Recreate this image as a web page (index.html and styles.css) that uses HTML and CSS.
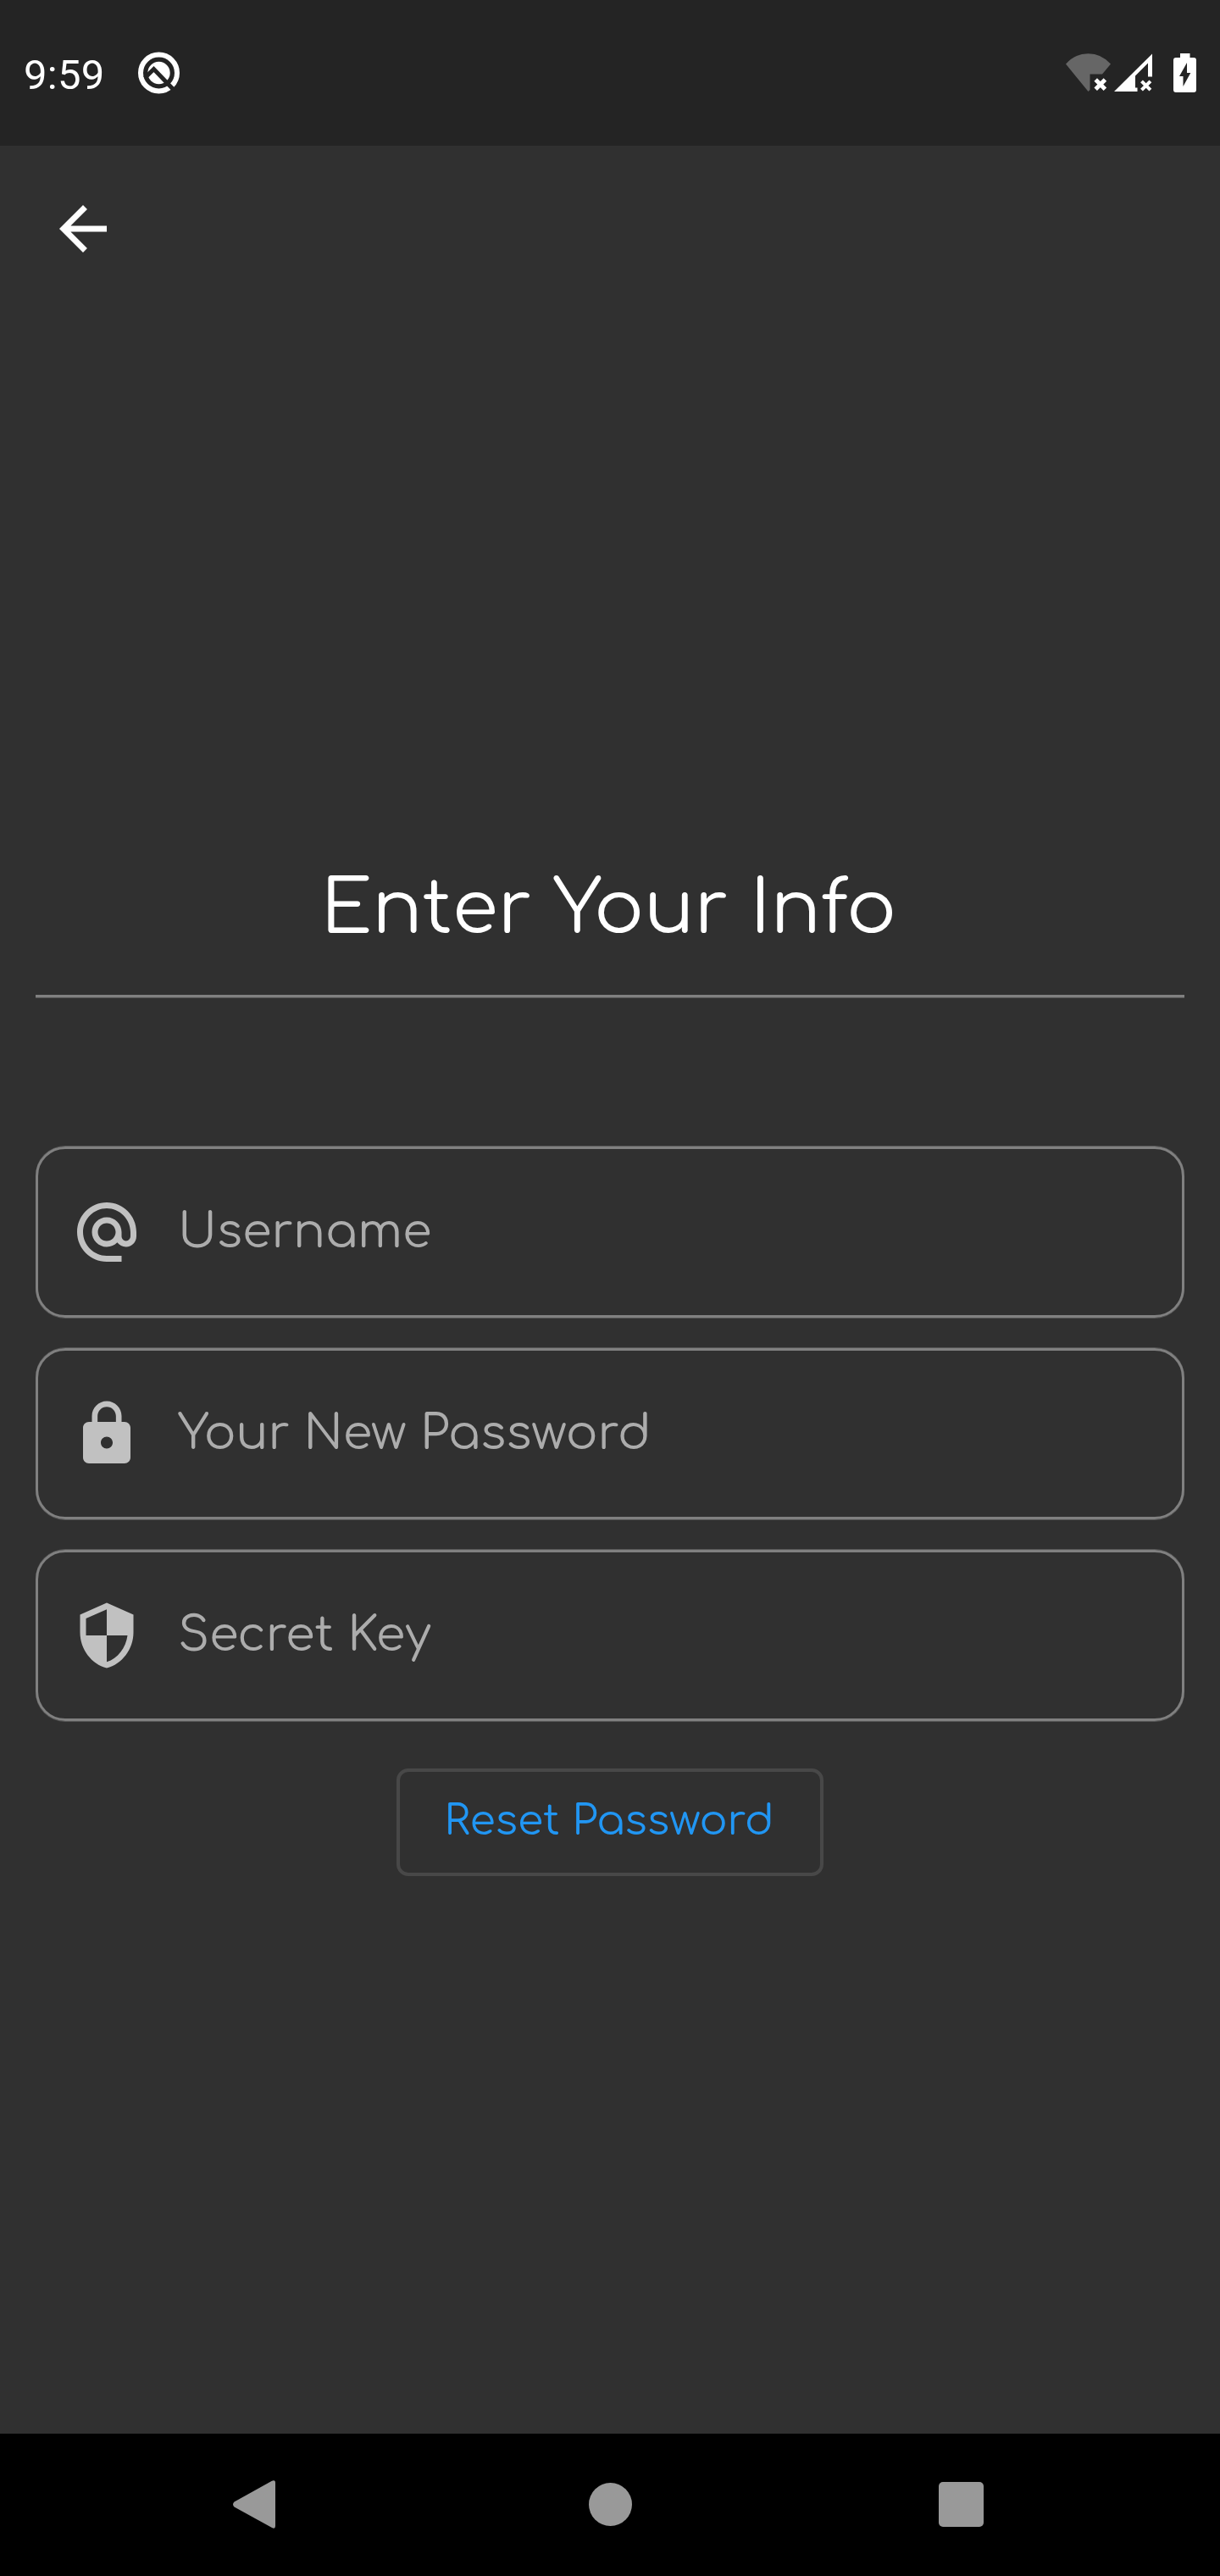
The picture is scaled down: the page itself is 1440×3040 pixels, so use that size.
FILE: index.html
```html
<!DOCTYPE html>
<html lang="en">
<head>
<meta charset="utf-8">
<title>Reset Password</title>
<link rel="stylesheet" href="styles.css">
</head>
<body>
<div class="screen">
  <header class="status">
    <span class="clock">9:59</span>
    <svg class="status-q" viewBox="0 0 50 50">
      <circle cx="24.500" cy="25" r="21.500" fill="none" stroke="#fff" stroke-width="6"/>
      <circle cx="24.500" cy="25" r="13.200" fill="#fff"/>
      <path d="M8 31 18.500 20.500 43 46" fill="none" stroke="#242424" stroke-width="5"/>
    </svg>
    <div class="status-icons">
      <svg class="wifi" viewBox="0 0 54 46">
        <path d="M0 12.500Q11 .2 26.500 .2T53 12.500L43 24.500H28.500V43L26.500 45Z" fill="#666"/>
        <path d="m35.200 31.100 11.200 11.200m0-11.200-11.200 11.200" stroke="#fff" stroke-width="5"/>
      </svg>
      <svg class="cell" viewBox="0 0 45 46">
        <path d="M0 45 45 .5V27.500H40V11.500L25 26.500V40.500H27.500V45Z" fill="#fff"/>
        <path d="m32.500 32.800 10.400 10.400m0-10.400-10.400 10.400" stroke="#fff" stroke-width="4"/>
      </svg>
      <svg class="battery" viewBox="0 0 27 46">
        <path d="M8 0h11.500v5H24a3 3 0 0 1 3 3v35a3 3 0 0 1-3 3H3a3 3 0 0 1-3-3V8a3 3 0 0 1 3-3h5Z" fill="#fff"/>
        <path d="M16 11v12h4.300L11.500 39V27H7Z" fill="#242424"/>
      </svg>
    </div>
  </header>
  <main class="content">
    <svg class="back" viewBox="0 0 24 24"><path d="M20 11H7.830l5.590-5.590L12 4l-8 8 8 8 1.410-1.410L7.830 13H20v-2z"/></svg>
    <h1 class="title">Enter Your Info</h1>
    <div class="fields">
      <div class="field">
        <svg class="icon" viewBox="0 0 24 24"><path d="M12 2C6.480 2 2 6.480 2 12s4.480 10 10 10h5v-2h-5c-4.340 0-8-3.660-8-8s3.660-8 8-8 8 3.660 8 8v1.430c0 .790-.710 1.570-1.500 1.570s-1.500-.780-1.500-1.570V12c0-2.760-2.240-5-5-5s-5 2.240-5 5 2.240 5 5 5c1.380 0 2.640-.560 3.540-1.470.650.890 1.770 1.470 2.960 1.470 1.970 0 3.500-1.600 3.500-3.570V12c0-5.520-4.480-10-10-10zm0 13c-1.660 0-3-1.340-3-3s1.340-3 3-3 3 1.340 3 3-1.340 3-3 3z"/></svg>
        <span class="label">Username</span>
      </div>
      <div class="field">
        <svg class="icon" viewBox="0 0 24 24"><path d="M18 8h-1V6c0-2.760-2.240-5-5-5S7 3.240 7 6v2H6c-1.100 0-2 .9-2 2v10c0 1.100.9 2 2 2h12c1.100 0 2-.9 2-2V10c0-1.100-.9-2-2-2zm-6 9c-1.100 0-2-.9-2-2s.9-2 2-2 2 .9 2 2-.9 2-2 2zm3.100-9H8.900V6c0-1.710 1.390-3.100 3.100-3.100s3.100 1.390 3.100 3.100v2z"/></svg>
        <span class="label">Your New Password</span>
      </div>
      <div class="field">
        <svg class="icon" viewBox="0 0 24 24"><path d="M12 1 3 5v6c0 5.550 3.840 10.740 9 12 5.160-1.260 9-6.450 9-12V5l-9-4zm0 10.990h7c-.530 4.120-3.280 7.790-7 8.940V12H5V6.300l7-3.110v8.800z"/></svg>
        <span class="label">Secret Key</span>
      </div>
    </div>
    <button class="reset" type="button">Reset Password</button>
  </main>
  <nav class="nav">
    <svg class="nav-back" viewBox="0 0 50 57"><path d="M46 .7Q50-1 50 3V54Q50 58 46 56L1.500 31.500Q-1.500 28.500 1.500 25.500Z"/></svg>
    <svg class="nav-home" viewBox="0 0 51 51"><circle cx="25.500" cy="25.500" r="25.500"/></svg>
    <svg class="nav-recent" viewBox="0 0 53 53"><rect width="53" height="53" rx="5"/></svg>
  </nav>
</div>
</body>
</html>
```
FILE: styles.css
```css
* { box-sizing: border-box; }
body { margin: 0; background: #303030; }
svg { display: block; flex: none; }
.screen {
  width: 1440px;
  height: 3040px;
  display: flex;
  flex-direction: column;
  background: #303030;
  font-family: Comfortaa, Lato, sans-serif;
}
.status {
  height: 172px;
  padding: 0 28px;
  display: flex;
  align-items: flex-start;
  background: #242424;
  color: #fff;
}
.clock {
  width: 135px;
  margin-top: 60px;
  font: 49px/58px Roboto, sans-serif;
  letter-spacing: 0.3px;
}
.status-q { width: 50px; height: 50px; margin-top: 61px; }
.status-icons { display: flex; margin: 63px 0 0 auto; }
.wifi { width: 54px; height: 46px; }
.cell { width: 45px; height: 46px; margin-left: 3px; }
.battery { width: 27px; height: 46px; margin-left: 25px; }
.content {
  flex: 1;
  display: flex;
  flex-direction: column;
  padding: 56px 42px 0;
}
.back { width: 84px; height: 84px; margin-left: 14px; fill: #fff; }
.title {
  height: 178px;
  margin: 687px 0 0;
  padding: 14px 3px 0 0;
  border-bottom: 3px solid #808080;
  box-shadow: 0 1px #565656;
  color: #fff;
  font-size: 87.5px;
  font-weight: 400;
  line-height: 120px;
  text-align: center;
}
.fields { display: flex; flex-direction: column; gap: 36px; margin-top: 176px; }
.field {
  height: 202px;
  display: flex;
  align-items: center;
  padding-left: 39px;
  border: 3px solid #808080;
  border-radius: 35px;
  box-shadow: 0 -1px #565656, 0 1px #565656;
}
.icon { width: 84px; height: 84px; fill: #c1c1c1; }
.label {
  margin-left: 42px;
  color: #acacac;
  font-size: 56px;
  line-height: 80px;
  white-space: nowrap;
}
.reset {
  width: 504px;
  height: 127px;
  margin: 56px auto 0;
  padding: 0 2px 4px 0;
  border: 4px solid #484848;
  border-radius: 14px;
  background: none;
  color: #2196f3;
  font: 49px/64px Comfortaa, Lato, sans-serif;
  white-space: nowrap;
}
.nav {
  height: 168px;
  padding: 0 279px 1px 275px;
  display: flex;
  align-items: center;
  background: #000;
  fill: #999;
}
.nav-back { width: 50px; height: 57px; }
.nav-home { width: 51px; height: 51px; margin-left: 369.5px; }
.nav-recent { width: 53px; height: 53px; margin-left: auto; }
```
